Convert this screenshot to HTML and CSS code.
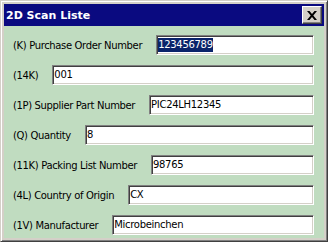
FILE: index.html
```html
<!DOCTYPE html>
<html>
<head>
<meta charset="utf-8">
<link rel="stylesheet" href="styles.css">
</head>
<body>
<div class="window">
  <div class="titlebar">
    <span class="title">2D Scan Liste</span>
    <div class="close">
      <svg width="10" height="9" viewBox="0 0 10 9"><path d="M0 0h2.5l2.5 3 2.5-3H10L6.3 4.5 10 9H7.5L5 6 2.5 9H0l3.7-4.5z" fill="#000"/></svg>
    </div>
  </div>
  <div class="content">
    <div class="row"><span class="label">(K) Purchase Order Number</span><div class="field"><span class="sel">123456789</span></div></div>
    <div class="row"><span class="label">(14K)</span><div class="field">001</div></div>
    <div class="row"><span class="label">(1P) Supplier Part Number</span><div class="field">PIC24LH12345</div></div>
    <div class="row"><span class="label">(Q) Quantity</span><div class="field">8</div></div>
    <div class="row"><span class="label">(11K) Packing List Number</span><div class="field">98765</div></div>
    <div class="row"><span class="label">(4L) Country of Origin</span><div class="field">CX</div></div>
    <div class="row"><span class="label">(1V) Manufacturer</span><div class="field">Microbeinchen</div></div>
  </div>
</div>
</body>
</html>
```

FILE: styles.css
```css
html, body {
  margin: 0;
  padding: 0;
  background: #ffffff;
}
.window {
  box-sizing: border-box;
  width: 328px;
  height: 242px;
  border: 1px solid;
  border-color: #d4d0c8 #404040 #404040 #d4d0c8;
  box-shadow: inset 1px 1px #ffffff, inset -1px -1px #808080;
  padding: 3px;
  background: #d4d0c8;
  display: flex;
  flex-direction: column;
  font-family: "DejaVu Sans", sans-serif;
}
.titlebar {
  height: 22px;
  flex: none;
  background: #0a0a80;
  display: flex;
  align-items: center;
  justify-content: space-between;
  padding: 0 2px 0 2px;
}
.title {
  color: #ffffff;
  font-weight: bold;
  font-size: 11px;
}
.close {
  box-sizing: border-box;
  width: 20px;
  height: 18px;
  background: #d4d0c8;
  border: 1px solid;
  border-color: #ffffff #404040 #404040 #ffffff;
  box-shadow: inset -1px -1px #808080;
  display: flex;
  align-items: center;
  justify-content: center;
}
.close svg {
  display: block;
}
.content {
  flex: 1;
  background: #c0dcc0;
  padding: 9px 10px 0 9px;
  display: flex;
  flex-direction: column;
  gap: 10px;
}
.row {
  display: flex;
  align-items: center;
  gap: 14px;
  height: 20px;
}
.label {
  font-size: 10px;
  letter-spacing: -0.35px;
  color: #000000;
  white-space: nowrap;
}
.field {
  flex: 1;
  box-sizing: border-box;
  height: 20px;
  background: #ffffff;
  border: 1px solid;
  border-color: #808080 #ffffff #ffffff #808080;
  box-shadow: inset 1px 1px #404040, inset -1px -1px #d4d0c8;
  padding: 1px 1px 0 1px;
  font-size: 10px;
  letter-spacing: -0.3px;
  line-height: 16px;
  color: #000000;
  white-space: nowrap;
  overflow: hidden;
}
.sel {
  background: #0a246a;
  color: #ffffff;
  display: inline-block;
  line-height: 14px;
}
```
